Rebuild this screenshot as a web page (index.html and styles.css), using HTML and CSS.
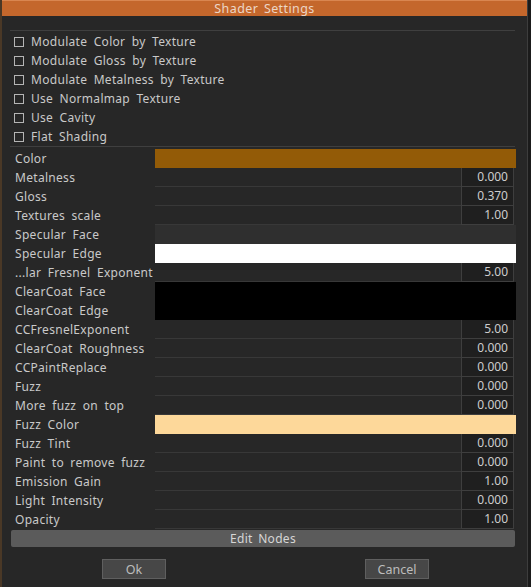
FILE: index.html
```html
<!DOCTYPE html>
<html lang="en">
<head>
  <meta charset="UTF-8">
  <title>Shader Settings</title>
  <link rel="stylesheet" href="styles.css">
</head>
<body>
  <div class="dialog">
    <div class="title">Shader Settings</div>

    <div class="content">
      <div class="options">
        <label class="check"><span class="box"></span>Modulate Color by Texture</label>
        <label class="check"><span class="box"></span>Modulate Gloss by Texture</label>
        <label class="check"><span class="box"></span>Modulate Metalness by Texture</label>
        <label class="check"><span class="box"></span>Use Normalmap Texture</label>
        <label class="check"><span class="box"></span>Use Cavity</label>
        <label class="check"><span class="box"></span>Flat Shading</label>
      </div>

      <div class="params">
        <div class="row"><span class="name">Color</span><span class="swatch" style="background:#935b07"></span></div>
        <div class="row"><span class="name">Metalness</span><span class="line"></span><span class="value">0.000</span></div>
        <div class="row"><span class="name">Gloss</span><span class="line"></span><span class="value">0.370</span></div>
        <div class="row"><span class="name">Textures scale</span><span class="line"></span><span class="value">1.00</span></div>
        <div class="row"><span class="name">Specular Face</span><span class="swatch" style="background:#2f2f2f"></span></div>
        <div class="row"><span class="name">Specular Edge</span><span class="swatch" style="background:#ffffff"></span></div>
        <div class="row"><span class="name">...lar Fresnel Exponent</span><span class="line"></span><span class="value">5.00</span></div>
        <div class="row"><span class="name">ClearCoat Face</span><span class="swatch" style="background:#000000"></span></div>
        <div class="row"><span class="name">ClearCoat Edge</span><span class="swatch" style="background:#000000"></span></div>
        <div class="row"><span class="name">CCFresnelExponent</span><span class="line"></span><span class="value">5.00</span></div>
        <div class="row"><span class="name">ClearCoat Roughness</span><span class="line"></span><span class="value">0.000</span></div>
        <div class="row"><span class="name">CCPaintReplace</span><span class="line"></span><span class="value">0.000</span></div>
        <div class="row"><span class="name">Fuzz</span><span class="line"></span><span class="value">0.000</span></div>
        <div class="row"><span class="name">More fuzz on top</span><span class="line"></span><span class="value">0.000</span></div>
        <div class="row"><span class="name">Fuzz Color</span><span class="swatch" style="background:#fdd89a"></span></div>
        <div class="row"><span class="name">Fuzz Tint</span><span class="line"></span><span class="value">0.000</span></div>
        <div class="row"><span class="name">Paint to remove fuzz</span><span class="line"></span><span class="value">0.000</span></div>
        <div class="row"><span class="name">Emission Gain</span><span class="line"></span><span class="value">1.00</span></div>
        <div class="row"><span class="name">Light Intensity</span><span class="line"></span><span class="value">0.000</span></div>
        <div class="row"><span class="name">Opacity</span><span class="line"></span><span class="value">1.00</span></div>
      </div>

      <div class="edit-nodes">Edit Nodes</div>

      <div class="buttons">
        <button class="btn">Ok</button>
        <button class="btn">Cancel</button>
      </div>
    </div>
  </div>
</body>
</html>
```

FILE: styles.css
```css
body {
  margin: 0;
  background: #1b1b1b;
  font-family: "Noto Sans", sans-serif;
  font-size: 12px;
  color: #c9c9c9;
}
.dialog {
  width: 525px;
  height: 587px;
  border-left: 2px solid #4a3826;
  border-right: 1px solid #3d3d3d;
  background: #272727;
  box-sizing: content-box;
}
.title {
  height: 16px;
  line-height: 15px;
  background: #c4672c;
  border-top: 1px solid #d98650;
  box-sizing: border-box;
  text-align: center;
  color: #ecd6c6;
  font-size: 12.5px;
  letter-spacing: 0.4px;
  word-spacing: 2px;
}
.content {
  padding-left: 9px;
  width: 505px;
}
.options {
  margin-top: 14px;
  border-top: 1px solid #3f3f3f;
  border-bottom: 1px solid #3f3f3f;
  padding: 1px 0 0;
  margin-right: 1px;
  margin-left: -1px;
}
.check {
  display: flex;
  align-items: center;
  height: 19px;
  padding-left: 4px;
  letter-spacing: 0.3px;
  word-spacing: 3px;
}
.box {
  width: 8px;
  height: 8px;
  border: 1px solid #b5b5b5;
  margin-right: 7px;
}
.params {
  display: flex;
  flex-direction: column;
  margin-top: 2px;
}
.row {
  display: flex;
  height: 19px;
  line-height: 19px;
}
.name {
  width: 140px;
  padding-left: 4px;
  flex: none;
  white-space: nowrap;
  overflow: hidden;
  letter-spacing: 0.3px;
  word-spacing: 3px;
}
.swatch {
  flex: 1;
}
.line {
  flex: 1;
  border-bottom: 1px solid #383838;
}
.value {
  margin-right: 2px;
  border: 1px solid #3e3e3e;
  border-top: none;
  background: #1f1f1f;
  text-align: right;
  padding-right: 5px;
  box-sizing: border-box;
  width: 53px;
  line-height: 18px;
  color: #cdcdcd;
}
.edit-nodes {
  margin-top: 1px;
  height: 17px;
  line-height: 17px;
  background: #5b5b5b;
  border-radius: 2px;
  margin-right: 1px;
  text-align: center;
  color: #d6d6d6;
  letter-spacing: 0.3px;
  word-spacing: 2px;
}
.buttons {
  display: flex;
  gap: 199px;
  padding-left: 91px;
  margin-top: 12px;
}
.btn {
  width: 64px;
  height: 20px;
  padding: 0;
  background: #474747;
  border: 1px solid #5f5f5f;
  color: #bdbdbd;
  font-family: "Noto Sans", sans-serif;
  font-size: 12.5px;
}
```
